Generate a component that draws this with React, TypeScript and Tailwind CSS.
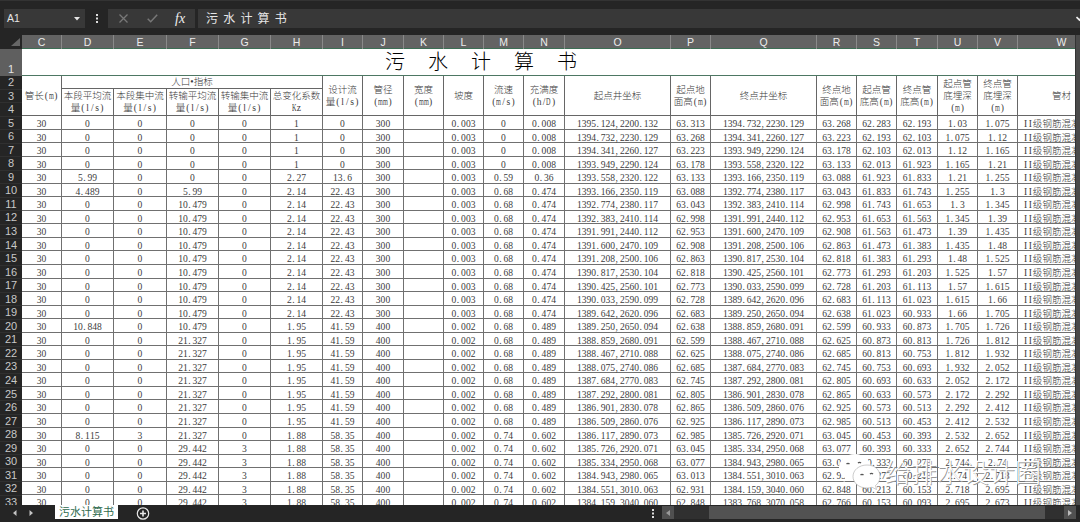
import { Fragment, type ReactNode } from 'react';

const columns = 'CDEFGHIJKLMNOPQRSTUVW'.split('');

const gridCols =
  'grid grid-cols-[40px_52px_53px_52px_52px_52px_40px_41px_40px_40px_40px_41px_106px_40px_106px_40px_40px_41px_40px_40px_88px]';

const flow = {
  a: ['0', '0', '0', '0', '1', '0', '300', '', '0.003', '0', '0.008'],
  b: ['5.99', '0', '0', '0', '2.27', '13.6', '300', '', '0.003', '0.59', '0.36'],
  c: ['4.489', '0', '5.99', '0', '2.14', '22.43', '300', '', '0.003', '0.68', '0.474'],
  d: ['0', '0', '10.479', '0', '2.14', '22.43', '300', '', '0.003', '0.68', '0.474'],
  e: ['10.848', '0', '10.479', '0', '1.95', '41.59', '400', '', '0.002', '0.68', '0.489'],
  f: ['0', '0', '21.327', '0', '1.95', '41.59', '400', '', '0.002', '0.68', '0.489'],
  g: ['8.115', '3', '21.327', '0', '1.88', '58.35', '400', '', '0.002', '0.74', '0.602'],
  h: ['0', '0', '29.442', '3', '1.88', '58.35', '400', '', '0.002', '0.74', '0.602'],
};

const flowByRow = 'aaaabcdddddddddefffffffghhhhh'.split('') as (keyof typeof flow)[];

// well coordinates, ground level, pipe invert level, cover depth
const wells = [
  ['1395.124,2200.132', '63.313', '62.283', '1.03'],
  ['1394.732,2230.129', '63.268', '62.193', '1.075'],
  ['1394.341,2260.127', '63.223', '62.103', '1.12'],
  ['1393.949,2290.124', '63.178', '62.013', '1.165'],
  ['1393.558,2320.122', '63.133', '61.923', '1.21'],
  ['1393.166,2350.119', '63.088', '61.833', '1.255'],
  ['1392.774,2380.117', '63.043', '61.743', '1.3'],
  ['1392.383,2410.114', '62.998', '61.653', '1.345'],
  ['1391.991,2440.112', '62.953', '61.563', '1.39'],
  ['1391.600,2470.109', '62.908', '61.473', '1.435'],
  ['1391.208,2500.106', '62.863', '61.383', '1.48'],
  ['1390.817,2530.104', '62.818', '61.293', '1.525'],
  ['1390.425,2560.101', '62.773', '61.203', '1.57'],
  ['1390.033,2590.099', '62.728', '61.113', '1.615'],
  ['1389.642,2620.096', '62.683', '61.023', '1.66'],
  ['1389.250,2650.094', '62.638', '60.933', '1.705'],
  ['1388.859,2680.091', '62.599', '60.873', '1.726'],
  ['1388.467,2710.088', '62.625', '60.813', '1.812'],
  ['1388.075,2740.086', '62.685', '60.753', '1.932'],
  ['1387.684,2770.083', '62.745', '60.693', '2.052'],
  ['1387.292,2800.081', '62.805', '60.633', '2.172'],
  ['1386.901,2830.078', '62.865', '60.573', '2.292'],
  ['1386.509,2860.076', '62.925', '60.513', '2.412'],
  ['1386.117,2890.073', '62.985', '60.453', '2.532'],
  ['1385.726,2920.071', '63.045', '60.393', '2.652'],
  ['1385.334,2950.068', '63.077', '60.333', '2.744'],
  ['1384.943,2980.065', '63.013', '60.273', '2.74'],
  ['1384.551,3010.063', '62.931', '60.213', '2.718'],
  ['1384.159,3040.060', '62.848', '60.153', '2.695'],
  ['1383.768,3070.058', '62.766', '60.093', '2.673'],
];

const rows = flowByRow.map((key, i) => {
  const from = wells[i];
  const to = wells[i + 1];
  return ['30', ...flow[key], from[0], from[1], to[0], to[1], from[2], to[2], from[3], to[3], 'II级钢筋混凝土管'];
});

// Every latin character takes half an em, as in a Chinese typewriter face
function Half({ text }: { text: string }) {
  return (
    <span className="whitespace-nowrap">
      {text.split(/([.,()/a-zA-Z])/).map((part, i) =>
        i % 2 === 1 ? (
          <span
            key={i}
            className={
              /[mKD]/.test(part)
                ? 'inline-block w-[0.5em] origin-left scale-x-[0.65]'
                : /[.,]/.test(part)
                  ? 'inline-block w-[0.5em] pl-[0.5px] text-left'
                  : 'inline-block w-[0.5em] text-center'
            }
          >
            {part}
          </span>
        ) : (
          <Fragment key={i}>{part}</Fragment>
        ),
      )}
    </span>
  );
}

function Head({ lines, className = 'row-span-2' }: { lines: string[]; className?: string }) {
  return (
    <div className={`flex flex-col items-center justify-center border-r border-b border-[#666] leading-[12px] ${className}`}>
      {lines.map((line) => (
        <Half key={line} text={line} />
      ))}
    </div>
  );
}

function Box({ className, children }: { className: string; children?: ReactNode }) {
  return <div className={`flex h-[19px] items-center bg-[#383838] ${className}`}>{children}</div>;
}

function FormulaBar() {
  return (
    <div className="flex h-[35px] shrink-0 items-start border-t border-[#333] bg-[#252525] pt-2 pl-1 text-[#e6e6e6]">
      <Box className="w-[81px] justify-between pr-[5px] pl-[3px] text-[10.5px]">
        <span>A1</span>
        <svg width="6" height="4" viewBox="0 0 6 4" fill="#e6e6e6">
          <path d="M0 0h6L3 3.5z" />
        </svg>
      </Box>
      <div className="flex h-[19px] w-[23px] items-center justify-center">
        <svg width="2" height="9" viewBox="0 0 2 9" fill="#ddd">
          <path d="M0 0h2v2H0zM0 3.5h2v2H0zM0 7h2v2H0z" />
        </svg>
      </div>
      <Box className="w-[87px]">
        <svg className="ml-[11px]" width="9" height="9" viewBox="0 0 9 9" stroke="#787878" strokeWidth="1.3">
          <path d="M.5.5l8 8M8.5.5l-8 8" />
        </svg>
        <svg className="ml-[19px]" width="11" height="9" viewBox="0 0 11 9" fill="none" stroke="#787878" strokeWidth="1.5">
          <path d="M.7 4.7l3 3L10.2.8" />
        </svg>
        <span className="ml-[17px] font-['Liberation_Serif','Noto_Sans_CJK_SC',serif] text-[14px] leading-none text-[#eee] italic">fx</span>
      </Box>
      <Box className="ml-[3px] flex-1 pl-2">
        <span className="text-[12px] tracking-[5.2px]">污水计算书</span>
        <svg className="mr-[-3px] ml-auto" width="7" height="6" viewBox="0 0 7 6" fill="none" stroke="#eee" strokeWidth="1.6">
          <path d="M.5 1l3 3 3-3" />
        </svg>
      </Box>
    </div>
  );
}

function RowNumbers() {
  return (
    <div className="w-[22px] shrink-0 bg-[#252525] text-center text-[11px] leading-[13px] text-[#c8c8c8]">
      <div className="flex h-[14px] items-end justify-end pr-[2px] pb-[3px]">
        <svg width="9" height="8" viewBox="0 0 9 8" fill="#666">
          <path d="M9 0v8H0z" />
        </svg>
      </div>
      <div className="flex h-[27px] items-end justify-center bg-[#5f5f5f] text-[#e4e4e4]">1</div>
      {Array.from({ length: 32 }, (_, i) => (
        <div key={i} className="h-[13.56px] border-b border-[#303030]">
          {i + 2}
        </div>
      ))}
    </div>
  );
}

function Sheet() {
  return (
    <div className="min-w-0 flex-1 overflow-hidden">
      <div className={`${gridCols} h-[14px] w-[1084px] border-b border-[#3c6e54] bg-[#636363] text-center text-[10.5px] leading-[14px] text-[#ececec]`}>
        {columns.map((name) => (
          <div key={name} className="border-r border-[#8a8a8a]">
            {name}
          </div>
        ))}
      </div>
      <div className="w-[1084px] bg-white font-['Liberation_Serif','Noto_Sans_CJK_SC',serif] text-[9.55px] text-[#3c3c3c] [font-kerning:none]">
        <div className="flex h-[27px] items-center border-b border-[#4d7763] pl-[363px] text-[20px] leading-none font-light tracking-[23px] text-black">
          污水计算书
        </div>
        <div className={`${gridCols} h-[40px] grid-rows-[13px_27px] font-light`}>
          <Head lines={['管长(m)']} />
          <Head lines={['人口•指标']} className="col-span-5" />
          <Head lines={['设计流', '量(l/s)']} />
          <Head lines={['管径', '(mm)']} />
          <Head lines={['宽度', '(mm)']} />
          <Head lines={['坡度']} />
          <Head lines={['流速', '(m/s)']} />
          <Head lines={['充满度', '(h/D)']} />
          <Head lines={['起点井坐标']} />
          <Head lines={['起点地', '面高(m)']} />
          <Head lines={['终点井坐标']} />
          <Head lines={['终点地', '面高(m)']} />
          <Head lines={['起点管', '底高(m)']} />
          <Head lines={['终点管', '底高(m)']} />
          <Head lines={['起点管', '底埋深', '(m)']} />
          <Head lines={['终点管', '底埋深', '(m)']} />
          <Head lines={['管材']} />
          <Head lines={['本段平均流', '量(l/s)']} className="col-start-2 row-start-2" />
          <Head lines={['本段集中流', '量(l/s)']} className="col-start-3 row-start-2" />
          <Head lines={['转输平均流', '量(l/s)']} className="col-start-4 row-start-2" />
          <Head lines={['转输集中流', '量(l/s)']} className="col-start-5 row-start-2" />
          <Head lines={['总变化系数', 'Kz']} className="col-start-6 row-start-2" />
        </div>
        {rows.map((row, i) => (
          <div key={i} className={`${gridCols} h-[13.56px] text-center leading-[15px] font-light`}>
            {row.map((value, j) => (
              <div key={j} className="h-[13.56px] border-r border-b border-[#707070]">
                <Half text={value} />
              </div>
            ))}
          </div>
        ))}
      </div>
    </div>
  );
}

function Watermark() {
  return (
    <div className="absolute top-[453px] left-[838px] flex items-center text-white">
      <svg width="44" height="40" viewBox="0 0 44 40" fill="#fff">
        <path d="M17 1C8 1 1 7 1 14.500c0 4.500 2 8 6 10.500l-1.500 4 5.500-3c2 .6 4 .8 6 .8 9 0 16-5.300 16-12.300S26 1 17 1z" />
        <path
          d="M29 12c-8 0-14 5-14 11.500S21 35 29 35c2 0 3.500-.3 5-.8l4.500 2.300-1-4c3-2.200 4.500-5.300 4.500-9C42 17 37 12 29 12z"
          stroke="#aaa"
          strokeWidth=".6"
        />
        <path d="M8.500 11a2 2 0 013 0M20 10a2 2 0 013 0M22.500 22a2 2 0 013 0M32 21a2 2 0 013 0" fill="none" stroke="#555" strokeWidth="1.2" />
      </svg>
      <span className="ml-[3px] text-[26px] leading-[34px] font-light whitespace-nowrap [text-shadow:0.7px_0.7px_0_#999]">给排水设计圈</span>
    </div>
  );
}

function TabBar() {
  return (
    <div className="flex h-[17px] shrink-0 items-start bg-[#252525]">
      <svg className="mt-[5px] ml-[13px]" width="20" height="6" viewBox="0 0 20 6" fill="#c4c4c4">
        <path d="M3.500 0v6L0 3zM16.500 0v6L20 3z" />
      </svg>
      <div className="ml-[22px] flex h-[14px] w-[63px] items-center justify-center bg-white text-[11px] leading-none whitespace-nowrap text-[#2f6b4e]">
        污水计算书
      </div>
      <svg className="mt-[2px] ml-[18px]" width="14" height="13" viewBox="0 0 14 13" fill="none" stroke="#e8e8e8" strokeWidth="1.2">
        <circle cx="7" cy="6.500" r="5.700" />
        <path d="M7 3.500v6M4 6.500h6" strokeWidth="1.600" />
      </svg>
      <svg className="mt-[4px] ml-auto" width="2" height="9" viewBox="0 0 2 9" fill="#ddd">
        <path d="M0 0h2v2H0zM0 3.500h2v2H0zM0 7h2v2H0z" />
      </svg>
      <div className="mt-px mr-[4px] ml-[8px] flex h-[13px] w-[414px] items-center bg-[#303030]">
        <div className="flex h-full w-[12px] items-center justify-center bg-[#505050]">
          <svg width="4" height="6" viewBox="0 0 4 6" fill="#999">
            <path d="M4 0v6L0 3z" />
          </svg>
        </div>
        <div className="ml-[35px] h-full w-[336px] bg-[#525252]" />
        <div className="ml-auto flex h-full w-[12px] items-center justify-center bg-[#505050]">
          <svg width="4" height="6" viewBox="0 0 4 6" fill="#bbb">
            <path d="M0 0v6l4-3z" />
          </svg>
        </div>
      </div>
    </div>
  );
}

export default function App() {
  return (
    <div className="relative flex h-[522px] w-[1080px] flex-col overflow-hidden bg-[#252525] font-['Liberation_Sans','Noto_Sans_CJK_SC',sans-serif]">
      <FormulaBar />
      <div className="flex min-h-0 flex-1 overflow-hidden">
        <RowNumbers />
        <Sheet />
        <div className="w-[5px] shrink-0 border-l border-[#333] bg-[#4a4a4a]" />
      </div>
      <TabBar />
      <Watermark />
    </div>
  );
}
